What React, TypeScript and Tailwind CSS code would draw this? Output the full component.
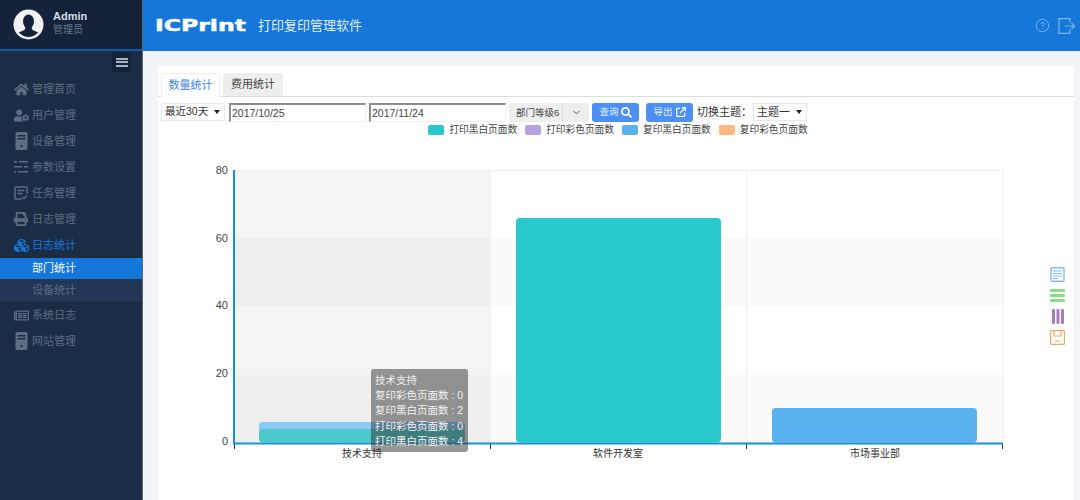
import type { ReactNode } from 'react'
import { FaCubes, FaHome, FaPrint, FaRegNewspaper, FaSearch, FaUserCog } from 'react-icons/fa'
import { FaArrowUpRightFromSquare } from 'react-icons/fa6'
import { ChevronDown, CircleHelp } from 'lucide-react'

const cjk = "font-['Liberation_Sans','Noto_Sans_CJK_SC',sans-serif]"

function Tower() {
  return (
    <svg width="13" height="18" viewBox="0 0 13 18" fill="currentColor">
      <path d="M2 0h9a1.500 1.500 0 0 1 1.500 1.500v15A1.500 1.500 0 0 1 11 18H2a1.500 1.500 0 0 1-1.500-1.500v-15A1.500 1.500 0 0 1 2 0z" />
      <path d="M2.500 3h8v1.500h-8zM2.500 6h8v1.500h-8zM5.500 13h2v2h-2z" fill="#1b2d45" />
    </svg>
  )
}

function ParamList() {
  return (
    <svg width="14" height="14" viewBox="0 0 14 14" fill="currentColor">
      <path d="M0 1h3v1.500H0zM5 1h9v1.500H5zM0 6h8v1.500H0zM10 6h4v1.500h-4zM0 11h2v1.500H0zM4 11h10v1.500H4z" />
    </svg>
  )
}

function TaskBox() {
  return (
    <svg width="14" height="14" viewBox="0 0 14 14" fill="none" stroke="currentColor" strokeWidth="1.500">
      <path d="M8 13H2a1 1 0 0 1-1-1V2a1 1 0 0 1 1-1h10a1 1 0 0 1 1 1v6" />
      <path d="M3.500 4.500h7M3.500 7.500h5M8.500 11l1.500 1.500 3-3" />
    </svg>
  )
}

const navTop: { label: string; icon: ReactNode }[] = [
  { label: '管理首页', icon: <FaHome size={15} /> },
  { label: '用户管理', icon: <FaUserCog size={15} /> },
  { label: '设备管理', icon: <Tower /> },
  { label: '参数设置', icon: <ParamList /> },
  { label: '任务管理', icon: <TaskBox /> },
  { label: '日志管理', icon: <FaPrint size={14} /> },
]

const navBottom: { label: string; icon: ReactNode }[] = [
  { label: '系统日志', icon: <FaRegNewspaper size={15} /> },
  { label: '网站管理', icon: <Tower /> },
]

function NavItem({ label, icon, active }: { label: string; icon: ReactNode; active?: boolean }) {
  return (
    <div className={`flex h-[26px] items-center ${active ? 'text-[#1477d9]' : 'text-[#5d6d82]'}`}>
      <span className="flex w-[32px] justify-end pr-[2px]">
        <span className="flex w-[18px] justify-center">{icon}</span>
      </span>
      <span className="text-[11px]">{label}</span>
    </div>
  )
}

function Sidebar() {
  return (
    <aside className="flex w-[143px] shrink-0 flex-col border-r border-[#5a6675] bg-[#1b2d45]">
      <div className="flex h-[51px] items-center border-b-2 border-[#0f5aa8] bg-[#14233a] pl-[13px]">
        <svg width="31" height="31" viewBox="0 0 31 31">
          <circle cx="15.500" cy="15.500" r="15" fill="#f2f2f2" />
          <clipPath id="avatar">
            <circle cx="15.500" cy="15.500" r="12.500" />
          </clipPath>
          <g clipPath="url(#avatar)" fill="#14233a">
            <ellipse cx="15.500" cy="12.500" rx="5.500" ry="7" />
            <path d="M12.500 18h6l1 3 7 3v7h-22v-7l7-3z" />
          </g>
        </svg>
        <div className="ml-[9px] -mt-[3px]">
          <div className="text-[11px] leading-[14px] font-bold text-[#d5dce5]">Admin</div>
          <div className="text-[10px] leading-[14px] text-[#6b7a8c]">管理员</div>
        </div>
      </div>
      <div className="flex justify-end pt-[1px] pr-[11px]">
        <div className="flex h-[20px] w-[19px] flex-col items-center justify-center gap-[1.500px] bg-[#14233a]">
          <span className="h-[2px] w-[12px] bg-[#a9b2bd]" />
          <span className="h-[2px] w-[12px] bg-[#a9b2bd]" />
          <span className="h-[2px] w-[12px] bg-[#a9b2bd]" />
        </div>
      </div>
      <nav className="mt-[4px]">
        {navTop.map((n) => (
          <NavItem key={n.label} label={n.label} icon={n.icon} />
        ))}
        <NavItem label="日志统计" icon={<FaCubes size={15} />} active />
        <div className="flex h-[21px] items-center bg-[#1477d9] pl-[32px] text-[11px] text-white">部门统计</div>
        <div className="flex h-[22px] items-center bg-[#233656] pl-[32px] text-[11px] text-[#5d6d82]">设备统计</div>
        <div className="mt-[1px]">
          {navBottom.map((n) => (
            <NavItem key={n.label} label={n.label} icon={n.icon} />
          ))}
        </div>
      </nav>
    </aside>
  )
}

function Topbar() {
  return (
    <header className="flex h-[51px] shrink-0 items-center bg-[#1477d9] pr-[4px] pl-[12px] text-white">
      <span className="inline-block w-[91px] origin-left scale-x-[1.47] font-['DejaVu_Sans',sans-serif] text-[16px] font-bold whitespace-nowrap [-webkit-text-stroke:0.5px_white]">
        ICPrint
      </span>
      <span className="ml-[12px] text-[13px] text-[#e3effb]">打印复印管理软件</span>
      <div className="ml-auto flex items-center gap-[8px] text-[#7fb4ea]">
        <CircleHelp size={15} strokeWidth={1.500} />
        <svg width="18" height="16" viewBox="0 0 18 16" fill="none" stroke="currentColor" strokeWidth="1.200">
          <path d="M12 4.500V.600H1v14.800h11v-4M6.500 8h10.500M13.500 5l3 3-3 3" />
        </svg>
      </div>
    </header>
  )
}

function Toolbar() {
  const field = 'h-[19px] w-[137px] border-t-2 border-r border-b border-l-2 border-t-[#8f8f8f] border-r-[#eeeeee] border-b-[#eeeeee] border-l-[#8f8f8f] pl-[1px] text-[10.500px] leading-[16px] text-[#444]'
  return (
    <div className="mt-[5px] flex h-[20px] items-center pl-[3px] text-[11px] text-[#333]">
      <div className="flex h-[18px] w-[64px] items-center justify-between border border-[#e8e8e8] pr-[3px] pl-[3px] text-[10.500px]">
        最近30天
        <span className="mr-[1px] border-x-[3.500px] border-t-[4px] border-x-transparent border-t-[#222]" />
      </div>
      <div className={`ml-[4px] ${field}`}>2017/10/25</div>
      <div className={`ml-[3px] ${field}`}>2017/11/24</div>
      <div className="ml-[3px] flex h-[19px] w-[80px] items-center rounded-[3px] bg-[#eeeeee] text-[9.500px] text-[#444]">
        <span className="w-[54px] border-r border-[#dddddd] pl-[7px] leading-[19px]">部门等级6</span>
        <span className="flex flex-1 justify-center">
          <ChevronDown size={11} />
        </span>
      </div>
      <div className="ml-[3px] flex h-[19px] w-[47px] items-center justify-center gap-[2px] rounded-[3px] bg-[#4c90f5] text-[9.500px] text-[#e6f0ff]">
        查询
        <FaSearch size={11} className="text-white" />
      </div>
      <div className="ml-[7px] flex h-[19px] w-[47px] items-center justify-center gap-[3px] rounded-[3px] bg-[#4c90f5] text-[9.500px] text-[#e6f0ff]">
        导出
        <FaArrowUpRightFromSquare size={10} className="text-white" />
      </div>
      <span className="ml-[4px] w-[53px] whitespace-nowrap">切换主题：</span>
      <div className="ml-[3px] flex h-[18px] w-[54px] items-center justify-between border border-[#e8e8e8] px-[3px]">
        主题一
        <span className="mr-[1px] border-x-[3.500px] border-t-[4px] border-x-transparent border-t-[#222]" />
      </div>
    </div>
  )
}

const legend = [
  { label: '打印黑白页面数', color: 'bg-[#2ac9ce]' },
  { label: '打印彩色页面数', color: 'bg-[#b6a2de]' },
  { label: '复印黑白页面数', color: 'bg-[#5ab1ef]' },
  { label: '复印彩色页面数', color: 'bg-[#ffb980]' },
]

function Legend() {
  return (
    <div className="mt-[1px] mb-[3px] flex h-[14px] items-center justify-center gap-[8px] pl-[4px] text-[9.700px] text-[#444]">
      {legend.map((l) => (
        <div key={l.label} className="flex items-center gap-[5px]">
          <span className={`h-[10px] w-[16px] rounded-[2px] ${l.color}`} />
          {l.label}
        </div>
      ))}
    </div>
  )
}

function Chart() {
  const ticks = [
    { label: '80', y: 174 },
    { label: '60', y: 242 },
    { label: '40', y: 309 },
    { label: '20', y: 377 },
    { label: '0', y: 445 },
  ]
  const cats = [
    { label: '技术支持', x: 362 },
    { label: '软件开发室', x: 618 },
    { label: '市场事业部', x: 875 },
  ]
  return (
    <svg width="916" height="360" viewBox="158 140 916 360" className="block">
      <rect x="234" y="238" width="769" height="68" fill="#fafafa" />
      <rect x="234" y="375" width="769" height="68" fill="#fafafa" />
      <rect x="234" y="170" width="256" height="273" fill="#969696" fillOpacity="0.1" />
      <path d="M234.500 170.500H1003M490.500 170V443M746.500 170V443M1003 170V443" stroke="#f0f0f0" fill="none" />
      <rect x="259" y="422" width="206" height="12" rx="4" fill="#8ccaf5" />
      <rect x="259" y="429" width="206" height="13.500" rx="4" fill="#4cc9cc" />
      <rect x="516" y="218" width="205" height="224.500" rx="4" fill="#2ac9ce" />
      <rect x="772" y="408" width="205" height="34.500" rx="4" fill="#5ab1ef" />
      <path d="M234 170V444" stroke="#1295d8" strokeWidth="2" />
      <path d="M233 443.500H1003" stroke="#1295d8" strokeWidth="2" />
      <path d="M234.500 444V449M490.500 444V449M746.500 444V449M1002.500 444V449" stroke="#333" />
      {ticks.map((t) => (
        <text key={t.label} x="228" y={t.y} textAnchor="end" fontSize="11" fill="#444" fontFamily="Liberation Sans, sans-serif">
          {t.label}
        </text>
      ))}
      {cats.map((c) => (
        <text key={c.label} x={c.x} y="457" textAnchor="middle" fontSize="10" fill="#333" fontFamily="Liberation Sans, Noto Sans CJK SC, sans-serif">
          {c.label}
        </text>
      ))}
    </svg>
  )
}

function Tooltip() {
  const lines = ['技术支持', '复印彩色页面数 : 0', '复印黑白页面数 : 2', '打印彩色页面数 : 0', '打印黑白页面数 : 4']
  return (
    <div className="absolute top-[303px] left-[213px] h-[83px] w-[97px] rounded-[3px] bg-[#323232]/50 px-[4px] py-[4px] text-[10.500px] leading-[15.200px] whitespace-nowrap text-[#f2f2f2]">
      {lines.map((l) => (
        <div key={l}>{l}</div>
      ))}
    </div>
  )
}

function Toolbox() {
  return (
    <div className="absolute top-[201px] right-[9px] flex flex-col items-center">
      <svg width="15" height="15" viewBox="0 0 15 15" fill="none" stroke="#7dbdf5">
        <rect x="1" y="0.700" width="13" height="13.600" rx="1" strokeWidth="1.400" />
        <path d="M3 4h9M3 6.500h9M3 9h9M3 11.500h5" strokeWidth="1" />
      </svg>
      <svg width="15" height="13" viewBox="0 0 15 13" fill="#86df86" className="mt-[7px]">
        <rect x="0" y="0" width="15" height="3" rx="1" />
        <rect x="0" y="5" width="15" height="3" rx="1" />
        <rect x="0" y="10" width="15" height="3" rx="1" />
      </svg>
      <svg width="12" height="15" viewBox="0 0 12 15" fill="#a47cc4" className="mt-[7px]">
        <rect x="0" y="0" width="3" height="15" rx="1" />
        <rect x="4.500" y="0" width="3" height="15" rx="1" />
        <rect x="9" y="0" width="3" height="15" rx="1" />
      </svg>
      <svg width="15" height="15" viewBox="0 0 15 15" fill="none" stroke="#f0a860" strokeWidth="1.200" className="mt-[6px]">
        <rect x="0.600" y="0.600" width="13.800" height="13.800" rx="1" />
        <path d="M4 1v5h7V1M5 11h5" />
      </svg>
    </div>
  )
}

export default function App() {
  return (
    <div className={`flex h-[500px] w-[1080px] overflow-hidden bg-[#f1f3f7] ${cjk}`}>
      <Sidebar />
      <div className="flex min-w-0 flex-1 flex-col">
        <Topbar />
        <main className="flex-1 pt-[15px] pr-[6px] pl-[15px]">
          <div className="relative h-[434px] overflow-hidden bg-white">
            <div className="flex h-[31px] items-end gap-[3px] border-b border-[#dddddd] pl-[3px] text-[11px]">
              <div className="flex h-[24px] w-[59px] translate-y-[1px] items-center justify-center rounded-t-[3px] border border-b-0 border-[#eeeeee] bg-white text-[#3f86e0]">
                数量统计
              </div>
              <div className="flex h-[23px] w-[60px] items-center justify-center rounded-t-[3px] bg-[#eeeeee] text-[#444]">
                费用统计
              </div>
            </div>
            <Toolbar />
            <Legend />
            <Chart />
            <Tooltip />
            <Toolbox />
          </div>
        </main>
      </div>
    </div>
  )
}
